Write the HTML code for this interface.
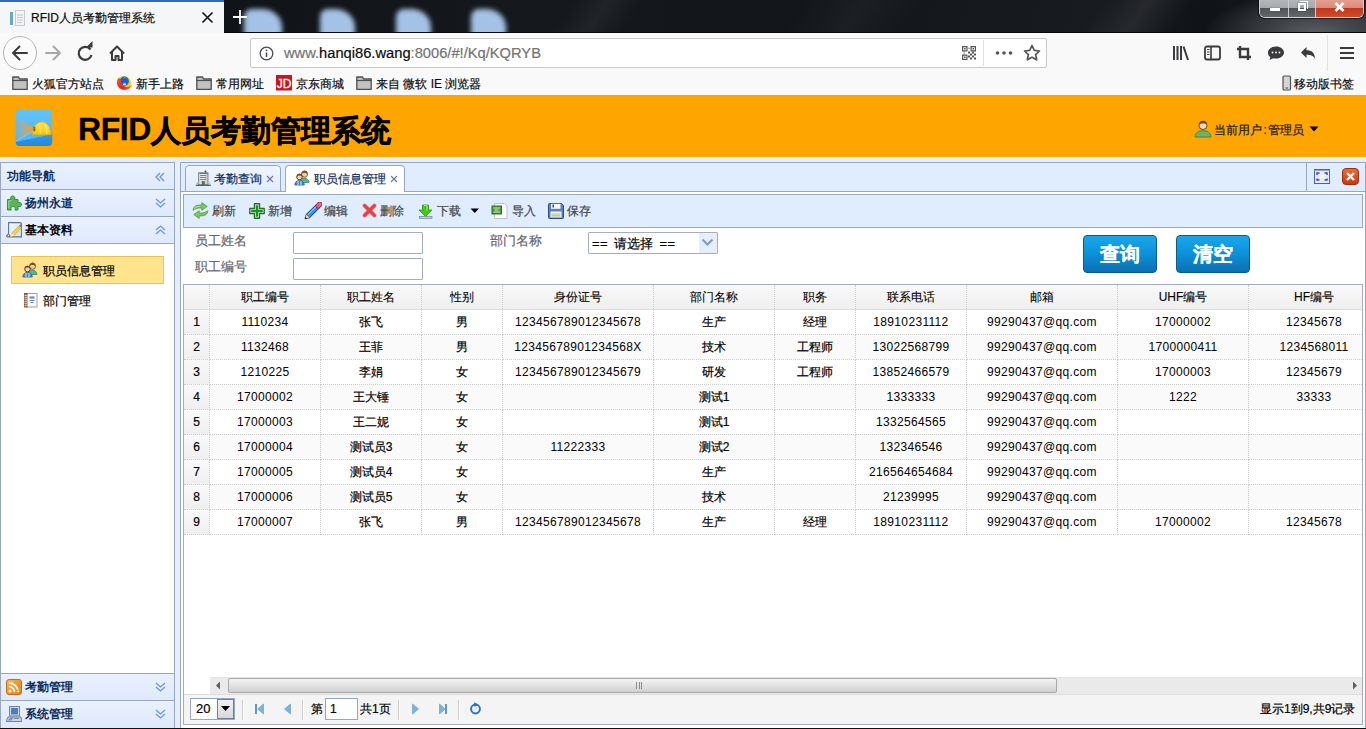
<!DOCTYPE html>
<html><head><meta charset="utf-8"><title>RFID</title>
<style>
*{box-sizing:border-box}
html,body{margin:0;padding:0;width:1366px;height:729px;overflow:hidden;background:#f9f9fa;font-family:"Liberation Sans",sans-serif;font-size:12px;color:#000}
body{-webkit-text-stroke-width:0.2px}
.a{position:absolute}
#tabbar{left:0;top:0;width:1366px;height:33px;background:radial-gradient(ellipse 110px 40px at 1315px 32px,rgba(110,113,118,.75),rgba(110,113,118,0)),linear-gradient(100deg,#0d1014 0%,#15191e 40%,#12161b 60%,#181c21 80%,#101317 88%,#1c1f23 100%);overflow:hidden}
.blob{position:absolute;top:9px;width:35px;height:30px;border-radius:8px 20px 0 0/8px 18px 0 0;background:#a4c2e6;filter:blur(2.8px)}
#acttab{left:0;top:0;width:224px;height:33px;background:#f5f6f7;border-top:2px solid #2f69c4}
#navbar{left:0;top:33px;width:1366px;height:62px;background:#f9f9fa}
#urlbox{left:250px;top:38px;width:797px;height:30px;border:1px solid #c9c9cb;border-radius:2px;background:#fff}
.bm{top:76px;height:17px;line-height:17px;font-size:12px;color:#0c0c0d;white-space:nowrap}
#hdr{left:0;top:95px;width:1366px;height:62px;background:#ffa500}
#ttl{left:78px;top:111px;font-size:30px;font-weight:bold;color:#000;line-height:36px;white-space:nowrap;-webkit-text-stroke:0.6px #000}
#main{left:0;top:157px;width:1366px;height:571px;background:#e6eef8}
#taskbar{left:0;top:728px;width:1366px;height:1px;background:#111;z-index:10}
.ph{position:absolute;left:0;width:173px;height:27px;background:linear-gradient(to bottom,#eaf1fd 0,#dee9fb 100%);border-bottom:1px solid #97a7c3}
.pt{position:absolute;top:6px;margin-left:1px;-webkit-text-stroke-width:0;font-weight:bold;color:#0e2d5f;font-size:12px;line-height:14px;white-space:nowrap}
.chev{position:absolute;left:155px;top:8px}
.ico{position:absolute}
.tb{position:absolute;top:203px;line-height:16px;color:#444;white-space:nowrap}
.lbl{position:absolute;color:#666670;font-size:13px;line-height:15px;white-space:nowrap}
.inp{position:absolute;border:1px solid #a6acc4;background:#fff;border-radius:1px}
.g{position:absolute;left:0;width:1179px;height:25px}
.c{position:absolute;top:0;height:25px;line-height:25px;text-align:center;white-space:nowrap;overflow:hidden;border-right:1px dotted #ccc;border-bottom:1px dotted #ccc}
.hd .c{border-bottom:none;color:#000;-webkit-text-stroke-width:0.1px}
.n{letter-spacing:0.33px;-webkit-text-stroke-width:0}
.sep{position:absolute;top:700px;width:2px;height:20px;border-left:1px solid #ccc;border-right:1px solid #fff}
</style></head><body>
<!-- TAB BAR -->
<div id="tabbar" class="a">
  <div class="a" style="left:560px;top:-10px;width:70px;height:60px;background:linear-gradient(90deg,transparent,rgba(255,255,255,.05),transparent);transform:skewX(-35deg)"></div>
  <div class="a" style="left:790px;top:-10px;width:120px;height:60px;background:linear-gradient(90deg,transparent,rgba(255,255,255,.04),transparent);transform:skewX(-35deg)"></div>
  <div class="a" style="left:1090px;top:-10px;width:90px;height:60px;background:linear-gradient(90deg,transparent,rgba(255,255,255,.07),transparent);transform:skewX(-35deg)"></div>
  <div class="blob" style="left:244px;width:38px"></div>
  <div class="blob" style="left:320px"></div>
  <div class="blob" style="left:396px"></div>
  <div class="blob" style="left:471px"></div>
  <div class="a" style="left:0;top:32px;width:1366px;height:1px;background:#050608"></div>
</div>
<div id="acttab" class="a"></div>
<svg class="a" style="left:9px;top:9px" width="18" height="18" viewBox="0 0 18 18">
  <rect x="1" y="3" width="3" height="13" fill="#6ea5cf"/>
  <rect x="6.5" y="1.5" width="9" height="15" fill="#f4f4f4" stroke="#c9c9c9"/>
  <path d="M8 6h6M8 8.5h6M8 11h6M8 13.5h5" stroke="#c7c7c7" stroke-width="1"/>
</svg>
<div class="a" style="left:31px;top:10px;font-size:12px;line-height:16px;color:#0c0c0d;white-space:nowrap">RFID人员考勤管理系统</div>
<svg class="a" style="left:200px;top:10px" width="16" height="16" viewBox="0 0 16 16"><path d="M2.5 2.5l10 10M12.5 2.5l-10 10" stroke="#111" stroke-width="1.6"/></svg>
<svg class="a" style="left:232px;top:9px" width="16" height="16" viewBox="0 0 16 16"><path d="M8 1v14M1 8h14" stroke="#fff" stroke-width="1.8"/></svg>
<!-- window controls -->
<div class="a" style="left:1259px;top:-3px;width:105px;height:21px;border:1px solid #cfd2d6;border-top:none;border-radius:0 0 6px 6px;overflow:hidden;box-shadow:0 0 0 1px rgba(0,0,0,.55)">
  <div class="a" style="left:0;top:0;width:29px;height:20px;background:linear-gradient(#b9bcc0 0,#a4a8ac 55%,#4e5358 56%,#62676c 100%);border-right:1px solid #c9ccd0"></div>
  <div class="a" style="left:29px;top:0;width:27px;height:20px;background:linear-gradient(#b9bcc0 0,#a4a8ac 55%,#4e5358 56%,#62676c 100%);border-right:1px solid #c9ccd0"></div>
  <div class="a" style="left:56px;top:0;width:49px;height:20px;background:linear-gradient(#e8a597 0,#dc8a78 55%,#c3381c 56%,#cf4a2a 100%)"></div>
  <div class="a" style="left:10px;top:11px;width:10px;height:3px;background:#fff;box-shadow:0 0 1px #222"></div>
  <div class="a" style="left:38px;top:6px;width:8px;height:8px;border:2px solid #fff;box-shadow:0 0 1px #222"></div>
  <div class="a" style="left:40px;top:4px;width:8px;height:8px;border-top:1.5px solid #fff;border-right:1.5px solid #fff"></div>
  <svg class="a" style="left:74px;top:5px" width="11" height="10" viewBox="0 0 11 10"><path d="M1.5 1l8 8M9.5 1l-8 8" stroke="#fff" stroke-width="2.6"/></svg>
</div>
<!-- NAV -->
<div id="navbar" class="a"></div>
<svg class="a" style="left:0;top:33px" width="240" height="40" viewBox="0 33 240 40">
  <circle cx="20" cy="53" r="16.5" fill="#fbfbfb" stroke="#b5b5b7" stroke-width="1"/>
  <path d="M27 53H13M19.5 46.5L13 53l6.5 6.5" fill="none" stroke="#3b3b3d" stroke-width="2" stroke-linecap="round" stroke-linejoin="round"/>
  <path d="M60 53H46M53.5 46.5L60 53l-6.5 6.5" fill="none" stroke="#a8a8aa" stroke-width="2" stroke-linecap="round" stroke-linejoin="round"/>
  <path d="M90.5 49.5A6.5 6.5 0 1 0 91.5 55" fill="none" stroke="#3b3b3d" stroke-width="2.2"/>
  <path d="M86 47.5h6.5V41z" fill="#3b3b3d"/>
  <path d="M110 53.5L117 46.5l7 7M112 52v8h3.5v-4h3v4h3.5v-8" fill="none" stroke="#3b3b3d" stroke-width="2" stroke-linejoin="round"/>
</svg>
<div id="urlbox" class="a"></div>
<svg class="a" style="left:259px;top:46px" width="15" height="15" viewBox="0 0 15 15"><circle cx="7.5" cy="7.5" r="6.3" fill="none" stroke="#4a4a4f" stroke-width="1.3"/><path d="M7.5 6.5v4.5" stroke="#4a4a4f" stroke-width="1.5"/><circle cx="7.5" cy="4.3" r="0.9" fill="#4a4a4f"/></svg>
<div class="a" style="left:284px;top:44px;font-size:14.7px;line-height:18px;color:#737373;white-space:nowrap">www.<span style="color:#0c0c0d">hanqi86.wang</span>:8006/#!/Kq/KQRYB</div>
<svg class="a" style="left:962px;top:46px" width="14" height="14" viewBox="0 0 14 14">
  <path d="M.6 .6h4.3v4.3H.6zM9.1 .6h4.3v4.3H9.1zM.6 9.1h4.3v4.3H.6z" fill="none" stroke="#555" stroke-width="1.2"/>
  <path d="M2 2h1.5v1.5H2zM10.5 2H12v1.5h-1.5zM2 10.5h1.5V12H2z" fill="#555"/>
  <path d="M5 2.2h4M2.2 5v4" stroke="#888" stroke-width=".9"/>
  <path d="M6 5.5h2v2H6zM10 5.5h2v2h-2zM8 7.5h2v2H8zM12 7.5h2v2h-2zM6 9.5h2v2H6zM10 9.5h2v2h-2zM8 11.5h2v2H8zM12 11.5h2v2h-2z" fill="#555"/>
</svg>
<div class="a" style="left:983px;top:40px;width:1px;height:26px;background:#e0e0e1"></div>
<svg class="a" style="left:995px;top:49px" width="18" height="8" viewBox="0 0 18 8"><circle cx="2.5" cy="4" r="1.8" fill="#555"/><circle cx="9" cy="4" r="1.8" fill="#555"/><circle cx="15.5" cy="4" r="1.8" fill="#555"/></svg>
<svg class="a" style="left:1023px;top:44px" width="18" height="18" viewBox="0 0 18 18"><path d="M9 1.5l2.3 4.9 5.2.6-3.9 3.6 1.1 5.2L9 13.2l-4.7 2.6 1.1-5.2L1.5 7l5.2-.6z" fill="none" stroke="#555" stroke-width="1.7" stroke-linejoin="round"/></svg>
<svg class="a" style="left:1170px;top:44px" width="190" height="18" viewBox="0 0 190 18">
  <path d="M4 2v14M7.5 2v14M11 2v14M13.5 2.5l4.5 13.5" stroke="#3b3b3d" stroke-width="2"/>
  <rect x="35" y="2.5" width="15" height="13" rx="2" fill="none" stroke="#3b3b3d" stroke-width="1.8"/><path d="M41 2.5v13" stroke="#3b3b3d" stroke-width="1.6"/><path d="M37 5.5h2.5M37 8h2.5M37 10.5h2.5" stroke="#3b3b3d" stroke-width="1.2"/>
  <path d="M70 2v11h11M67 5h11v11" fill="none" stroke="#3b3b3d" stroke-width="2.4"/>
  <path d="M106 2.5c4.5 0 8 2.7 8 6s-3.5 6-8 6c-.9 0-1.8-.1-2.6-.3L99.5 16l.9-2.9c-1.7-1.1-2.4-2.6-2.4-4.6 0-3.3 3.5-6 8-6z" fill="#3b3b3d"/><circle cx="102.5" cy="8.5" r=".9" fill="#f9f9fa"/><circle cx="106" cy="8.5" r=".9" fill="#f9f9fa"/><circle cx="109.5" cy="8.5" r=".9" fill="#f9f9fa"/>
  <path d="M131 8.5l5.5-5.5v3.2c5 0 8.5 2.5 8.5 8.5-1.5-3-4-4-8.5-4v3.3z" fill="#3b3b3d"/>
  <path d="M170 4h14M170 9h14M170 14h14" stroke="#3b3b3d" stroke-width="2"/>
</svg>
<div class="a" style="left:1327px;top:35px;width:1px;height:36px;background:#e2e2e3"></div>
<!-- bookmarks -->
<svg class="a" style="left:0;top:74px" width="380" height="18" viewBox="0 74 380 18">
  <g id="fold"><path d="M12.8 77h5.5l1.6 2h7.3v10.3H12.8z" fill="#c2c2c2" stroke="#4f4f51" stroke-width="1.3" stroke-linejoin="round"/><path d="M12.8 80.5h14.4" stroke="#4f4f51" stroke-width="1.2"/></g>
  <use href="#fold" x="184"/>
  <use href="#fold" x="344"/>
  <defs><linearGradient id="ffx" x1="0" y1="0" x2="1" y2="1"><stop offset="0" stop-color="#ff5a1a"/><stop offset=".6" stop-color="#e8202e"/><stop offset="1" stop-color="#ff7a10"/></linearGradient></defs>
  <circle cx="124" cy="83" r="7" fill="#ffcc10"/>
  <circle cx="124.3" cy="81.2" r="4.6" fill="#1f5fd0"/>
  <path d="M124.3 76.6a4.6 4.6 0 0 1 2.5 .8c-1 .5-2.6.6-3.5 1.5z" fill="#30a8e0"/>
  <path d="M119.2 77.2c-2.8 2.6-2.9 7.6-.2 10.4 2.8 2.9 7.8 3.1 10.8.3 1-.9 1.6-1.8 2-2.9-1.6 1.8-4.8 2.4-7.2 1.6-2.6-.9-4.1-3.5-3.6-6.2-.9-.8-1.6-1.9-1.8-3.2z" fill="url(#ffx)"/>
  <ellipse cx="124.6" cy="84.2" rx="1.6" ry=".9" fill="#eaf0ff"/>
  <rect x="276" y="75" width="16" height="15.5" fill="#c8161e"/>
  <text x="284" y="87.5" font-family="Liberation Sans" font-size="12" fill="#fff" text-anchor="middle" stroke="#fff" stroke-width=".3">JD</text>
</svg>
<div class="bm a" style="left:32px">火狐官方站点</div>
<div class="bm a" style="left:136px">新手上路</div>
<div class="bm a" style="left:216px">常用网址</div>
<div class="bm a" style="left:296px">京东商城</div>
<div class="bm a" style="left:376px">来自 微软 IE 浏览器</div>
<svg class="a" style="left:1281px;top:75px" width="11" height="16" viewBox="0 0 11 16"><rect x="2" y="1" width="7.5" height="14" rx="1.3" fill="#d5d5d5" stroke="#4f4f51" stroke-width="1.2"/><path d="M4.5 13h2.5" stroke="#4f4f51"/></svg>
<div class="bm a" style="left:1294px">移动版书签</div>


<div id="hdr" class="a"></div>
<div id="ttl" class="a"><span style="font-size:32px;letter-spacing:-0.4px;-webkit-text-stroke-width:0.3px;vertical-align:1px">RFID</span>人员考勤管理系统</div>
<div class="a" style="left:1214px;top:123px;line-height:14px;color:#1a1a1a;white-space:nowrap">当前用户<span style="margin:0 1px 0 1.5px">:</span>管理员</div>
<div id="main" class="a"></div><div id="taskbar" class="a"></div>
<div class="a" style="left:0;top:157px;width:1366px;height:1px;background:#fdf6e3"></div>
<div class="a" style="left:0;top:162px;width:175px;height:566px;border:1px solid #97a7c3;border-bottom:none;background:#fff">
<div class="ph" style="top:0"><div class="pt" style="left:5px">功能导航</div></div>
<div class="ph" style="top:27px"><div class="pt" style="left:23px">扬州永道</div></div>
<div class="ph" style="top:54px"><div class="pt" style="left:23px;color:#000">基本资料</div></div>
<div class="ph" style="top:510px;border-top:1px solid #97a7c3;height:28px"><div class="pt" style="left:23px">考勤管理</div></div>
<div class="ph" style="top:538px;border-bottom:none;height:27px"><div class="pt" style="left:23px">系统管理</div></div>
<div class="a" style="left:10px;top:93px;width:153px;height:28px;background:#ffe48d;border:1px solid #f0c050"></div>
<div class="a" style="left:42px;top:101px;line-height:14px">职员信息管理</div>
<div class="a" style="left:42px;top:131px;line-height:14px">部门管理</div>
</div>
<div class="a" style="left:180px;top:162px;width:1186px;height:566px;border:1px solid #97a7c3;border-bottom:none;background:#fff"></div>
<div class="a" style="left:181px;top:163px;width:1184px;height:29px;background:#e0ecff;border-bottom:1px solid #97a7c3"></div>
<div class="a" style="left:1306px;top:163px;width:1px;height:29px;background:#97a7c3"></div>
<div class="a" style="left:185px;top:165px;width:96px;height:27px;border:1px solid #97a7c3;border-radius:4px 4px 0 0;background:linear-gradient(to bottom,#eff5ff 0,#e0ecff 100%)"></div>
<div class="a" style="left:285px;top:165px;width:120px;height:27px;border:1px solid #97a7c3;border-bottom:none;border-radius:4px 4px 0 0;background:#fff"></div>
<div class="a" style="left:214px;top:172px;line-height:14px;color:#0e2d5f;white-space:nowrap">考勤查询</div>
<div class="a" style="left:314px;top:172px;line-height:14px;color:#0e2d5f;white-space:nowrap">职员信息管理</div>
<div class="a" style="left:183px;top:194px;width:1180px;height:34px;border:1px solid #97a7c3;background:#e0ecff"></div>
<div class="tb" style="left:212px">刷新</div>
<div class="tb" style="left:268px">新增</div>
<div class="tb" style="left:324px">编辑</div>
<div class="tb" style="left:380px">删除</div>
<div class="tb" style="left:437px">下载</div>
<div class="tb" style="left:512px">导入</div>
<div class="tb" style="left:567px">保存</div>
<div class="lbl" style="left:195px;top:233px">员工姓名</div>
<div class="lbl" style="left:195px;top:259px">职工编号</div>
<div class="lbl" style="left:490px;top:233px">部门名称</div>
<div class="inp" style="left:293px;top:232px;width:130px;height:22px"></div>
<div class="inp" style="left:293px;top:258px;width:130px;height:22px"></div>
<div class="inp" style="left:588px;top:232px;width:130px;height:22px"></div>
<div class="a" style="left:592px;top:236px;font-size:13px;line-height:15px;white-space:nowrap;word-spacing:2px;letter-spacing:0.3px">== 请选择 ==</div>
<div class="a" style="left:1083px;top:235px;width:74px;height:38px;border:1px solid #0a5c8c;border-radius:4px;background:linear-gradient(to bottom,#1aa8ea 0,#0c90d8 50%,#0a70b0 100%);color:#fff;font-weight:bold;font-size:20px;line-height:36px;text-align:center">查询</div>
<div class="a" style="left:1176px;top:235px;width:74px;height:38px;border:1px solid #0a5c8c;border-radius:4px;background:linear-gradient(to bottom,#1aa8ea 0,#0c90d8 50%,#0a70b0 100%);color:#fff;font-weight:bold;font-size:20px;line-height:36px;text-align:center">清空</div>
<div class="a" style="left:183px;top:284px;width:1180px;height:441px;border:1px solid #a3acbc;background:#fff;overflow:hidden">
<div class="a hd" style="left:0;top:0;width:1178px;height:25px;background:linear-gradient(to bottom,#f9f9f9 0,#efefef 100%);border-bottom:1px solid #ddd">
<div class="c" style="left:0;width:26px;height:24px"></div>
<div class="c" style="left:26px;width:111px;height:24px;line-height:24px">职工编号</div>
<div class="c" style="left:137px;width:101px;height:24px;line-height:24px">职工姓名</div>
<div class="c" style="left:238px;width:81px;height:24px;line-height:24px">性别</div>
<div class="c" style="left:319px;width:151px;height:24px;line-height:24px">身份证号</div>
<div class="c" style="left:470px;width:121px;height:24px;line-height:24px">部门名称</div>
<div class="c" style="left:591px;width:81px;height:24px;line-height:24px">职务</div>
<div class="c" style="left:672px;width:111px;height:24px;line-height:24px">联系电话</div>
<div class="c" style="left:783px;width:151px;height:24px;line-height:24px">邮箱</div>
<div class="c" style="left:934px;width:131px;height:24px;line-height:24px">UHF编号</div>
<div class="c" style="left:1065px;width:131px;height:24px;line-height:24px">HF编号</div>
</div>
<div class="g" style="top:25px;background:#fff">
<div class="c" style="left:0;width:26px;background:linear-gradient(to bottom,#f9f9f9 0,#efefef 100%)">1</div>
<div class="c n" style="left:26px;width:111px">1110234</div>
<div class="c" style="left:137px;width:101px">张飞</div>
<div class="c" style="left:238px;width:81px">男</div>
<div class="c n" style="left:319px;width:151px">123456789012345678</div>
<div class="c" style="left:470px;width:121px">生产</div>
<div class="c" style="left:591px;width:81px">经理</div>
<div class="c n" style="left:672px;width:111px">18910231112</div>
<div class="c n" style="left:783px;width:151px">99290437@qq.com</div>
<div class="c n" style="left:934px;width:131px">17000002</div>
<div class="c n" style="left:1065px;width:131px">12345678</div>
</div>
<div class="g" style="top:50px;background:#fafafa">
<div class="c" style="left:0;width:26px;background:linear-gradient(to bottom,#f9f9f9 0,#efefef 100%)">2</div>
<div class="c n" style="left:26px;width:111px">1132468</div>
<div class="c" style="left:137px;width:101px">王菲</div>
<div class="c" style="left:238px;width:81px">男</div>
<div class="c n" style="left:319px;width:151px">12345678901234568X</div>
<div class="c" style="left:470px;width:121px">技术</div>
<div class="c" style="left:591px;width:81px">工程师</div>
<div class="c n" style="left:672px;width:111px">13022568799</div>
<div class="c n" style="left:783px;width:151px">99290437@qq.com</div>
<div class="c n" style="left:934px;width:131px">1700000411</div>
<div class="c n" style="left:1065px;width:131px">1234568011</div>
</div>
<div class="g" style="top:75px;background:#fff">
<div class="c" style="left:0;width:26px;background:linear-gradient(to bottom,#f9f9f9 0,#efefef 100%)">3</div>
<div class="c n" style="left:26px;width:111px">1210225</div>
<div class="c" style="left:137px;width:101px">李娟</div>
<div class="c" style="left:238px;width:81px">女</div>
<div class="c n" style="left:319px;width:151px">123456789012345679</div>
<div class="c" style="left:470px;width:121px">研发</div>
<div class="c" style="left:591px;width:81px">工程师</div>
<div class="c n" style="left:672px;width:111px">13852466579</div>
<div class="c n" style="left:783px;width:151px">99290437@qq.com</div>
<div class="c n" style="left:934px;width:131px">17000003</div>
<div class="c n" style="left:1065px;width:131px">12345679</div>
</div>
<div class="g" style="top:100px;background:#fafafa">
<div class="c" style="left:0;width:26px;background:linear-gradient(to bottom,#f9f9f9 0,#efefef 100%)">4</div>
<div class="c n" style="left:26px;width:111px">17000002</div>
<div class="c" style="left:137px;width:101px">王大锤</div>
<div class="c" style="left:238px;width:81px">女</div>
<div class="c" style="left:319px;width:151px"></div>
<div class="c" style="left:470px;width:121px">测试1</div>
<div class="c" style="left:591px;width:81px"></div>
<div class="c n" style="left:672px;width:111px">1333333</div>
<div class="c n" style="left:783px;width:151px">99290437@qq.com</div>
<div class="c n" style="left:934px;width:131px">1222</div>
<div class="c n" style="left:1065px;width:131px">33333</div>
</div>
<div class="g" style="top:125px;background:#fff">
<div class="c" style="left:0;width:26px;background:linear-gradient(to bottom,#f9f9f9 0,#efefef 100%)">5</div>
<div class="c n" style="left:26px;width:111px">17000003</div>
<div class="c" style="left:137px;width:101px">王二妮</div>
<div class="c" style="left:238px;width:81px">女</div>
<div class="c" style="left:319px;width:151px"></div>
<div class="c" style="left:470px;width:121px">测试1</div>
<div class="c" style="left:591px;width:81px"></div>
<div class="c n" style="left:672px;width:111px">1332564565</div>
<div class="c n" style="left:783px;width:151px">99290437@qq.com</div>
<div class="c" style="left:934px;width:131px"></div>
<div class="c" style="left:1065px;width:131px"></div>
</div>
<div class="g" style="top:150px;background:#fafafa">
<div class="c" style="left:0;width:26px;background:linear-gradient(to bottom,#f9f9f9 0,#efefef 100%)">6</div>
<div class="c n" style="left:26px;width:111px">17000004</div>
<div class="c" style="left:137px;width:101px">测试员3</div>
<div class="c" style="left:238px;width:81px">女</div>
<div class="c n" style="left:319px;width:151px">11222333</div>
<div class="c" style="left:470px;width:121px">测试2</div>
<div class="c" style="left:591px;width:81px"></div>
<div class="c n" style="left:672px;width:111px">132346546</div>
<div class="c n" style="left:783px;width:151px">99290437@qq.com</div>
<div class="c" style="left:934px;width:131px"></div>
<div class="c" style="left:1065px;width:131px"></div>
</div>
<div class="g" style="top:175px;background:#fff">
<div class="c" style="left:0;width:26px;background:linear-gradient(to bottom,#f9f9f9 0,#efefef 100%)">7</div>
<div class="c n" style="left:26px;width:111px">17000005</div>
<div class="c" style="left:137px;width:101px">测试员4</div>
<div class="c" style="left:238px;width:81px">女</div>
<div class="c" style="left:319px;width:151px"></div>
<div class="c" style="left:470px;width:121px">生产</div>
<div class="c" style="left:591px;width:81px"></div>
<div class="c n" style="left:672px;width:111px">216564654684</div>
<div class="c n" style="left:783px;width:151px">99290437@qq.com</div>
<div class="c" style="left:934px;width:131px"></div>
<div class="c" style="left:1065px;width:131px"></div>
</div>
<div class="g" style="top:200px;background:#fafafa">
<div class="c" style="left:0;width:26px;background:linear-gradient(to bottom,#f9f9f9 0,#efefef 100%)">8</div>
<div class="c n" style="left:26px;width:111px">17000006</div>
<div class="c" style="left:137px;width:101px">测试员5</div>
<div class="c" style="left:238px;width:81px">女</div>
<div class="c" style="left:319px;width:151px"></div>
<div class="c" style="left:470px;width:121px">技术</div>
<div class="c" style="left:591px;width:81px"></div>
<div class="c n" style="left:672px;width:111px">21239995</div>
<div class="c n" style="left:783px;width:151px">99290437@qq.com</div>
<div class="c" style="left:934px;width:131px"></div>
<div class="c" style="left:1065px;width:131px"></div>
</div>
<div class="g" style="top:225px;background:#fff">
<div class="c" style="left:0;width:26px;background:linear-gradient(to bottom,#f9f9f9 0,#efefef 100%)">9</div>
<div class="c n" style="left:26px;width:111px">17000007</div>
<div class="c" style="left:137px;width:101px">张飞</div>
<div class="c" style="left:238px;width:81px">男</div>
<div class="c n" style="left:319px;width:151px">123456789012345678</div>
<div class="c" style="left:470px;width:121px">生产</div>
<div class="c" style="left:591px;width:81px">经理</div>
<div class="c n" style="left:672px;width:111px">18910231112</div>
<div class="c n" style="left:783px;width:151px">99290437@qq.com</div>
<div class="c n" style="left:934px;width:131px">17000002</div>
<div class="c n" style="left:1065px;width:131px">12345678</div>
</div>
<div class="a" style="left:26px;top:392px;width:1153px;height:17px;background:#eaeaea;border-top:1px solid #e4e4e4"></div>
<svg class="a" style="left:26px;top:392px" width="18" height="17"><path d="M6 8.5L10 4.5v8z" fill="#606060"/></svg>
<div class="a" style="left:44px;top:393px;width:829px;height:15px;border:1px solid #a9a9a9;border-radius:2px;background:linear-gradient(to bottom,#f3f3f3 0,#e2e2e2 50%,#d0d0d0 100%)"></div>
<div class="a" style="left:452px;top:397px;width:6px;height:7px;border-left:1px solid #8a8a8a;border-right:1px solid #8a8a8a"></div><div class="a" style="left:455px;top:397px;width:1px;height:7px;background:#8a8a8a"></div>
<svg class="a" style="left:1161px;top:392px" width="18" height="17"><path d="M8 4.5L12 8.5l-4 4z" fill="#606060"/></svg>
<div class="a" style="left:0;top:409px;width:1178px;height:30px;background:#f4f4f4;border-top:1px solid #ddd"></div>
</div>
<div class="sep" style="left:242px"></div><div class="sep" style="left:302px"></div><div class="sep" style="left:398px"></div><div class="sep" style="left:458px"></div>
<div class="a" style="left:190px;top:698px;width:45px;height:22px;border:1px solid #97a7c3;background:#fff"></div>
<div class="a" style="left:196px;top:702px;font-size:13px;line-height:14px">20</div>
<div class="a" style="left:311px;top:702px;line-height:14px">第</div>
<div class="a" style="left:325px;top:698px;width:33px;height:22px;border:1px solid #97a7c3;background:#fff"></div>
<div class="a" style="left:330px;top:702px;line-height:14px">1</div>
<div class="a" style="left:360px;top:702px;line-height:14px">共1页</div>
<div class="a" style="left:1260px;top:702px;line-height:14px;white-space:nowrap">显示1到9,共9记录</div>
<svg class="a" style="left:6px;top:195px" width="16" height="16" viewBox="0 0 16 16">
<path d="M1.5 4.5h3.5c-.3-.5-.5-1-.5-1.5 0-1.2 1-2 2.2-2s2.2.8 2.2 2c0 .5-.2 1-.5 1.5h3.6v3.3c.5-.3 1-.5 1.5-.5 1.2 0 2 1 2 2.2s-.8 2.2-2 2.2c-.5 0-1-.2-1.5-.5V15H8.8c.3-.5.5-1 .5-1.5 0-1.2-1-2.1-2.2-2.1s-2.2.9-2.2 2.1c0 .5.2 1 .5 1.5H1.5z" fill="#58b658" stroke="#3b8f3b" stroke-width="1"/>
<path d="M2.8 5.8h2.7M2.8 5.8v7.5" stroke="#9ad89a" stroke-width="1"/></svg>
<svg class="a" style="left:6px;top:222px" width="16" height="16" viewBox="0 0 16 16">
<defs><linearGradient id="ntg" x1="0" y1="0" x2="1" y2="1"><stop offset="0" stop-color="#f4fbff"/><stop offset="1" stop-color="#c9e2f5"/></linearGradient></defs>
<path d="M2.6 .6h11.3c.9 0 1.6.7 1.6 1.6v12.7H1.5c-.8 0-1.1-.9-.6-1.4l1.7-1.6z" fill="url(#ntg)" stroke="#5d708c" stroke-width="1.1"/>
<path d="M3.5 12.5v2.2" stroke="#5d708c" stroke-width="1"/>
<path d="M4.6 14.6l1.2-3.4 7.3-7.6 2.4 2.3-7.4 7.6z" fill="#f3cd55" stroke="#d2a530" stroke-width=".7"/>
<path d="M4.6 14.6l1.2-3.4 2.3 2.3z" fill="#fdf0c8"/>
<path d="M13.1 3.6l1.3-1.3 2.4 2.3-1.3 1.3z" fill="#6b7a8a"/></svg>
<svg class="a" style="left:22px;top:262px" width="16" height="16" viewBox="0 0 16 16">
<circle cx="10.5" cy="4.3" r="3" fill="#f2cfa8" stroke="#8a4e22" stroke-width="1"/>
<path d="M7.6 3.8c.2-2.4 1.6-3.3 3-3.3 1.8 0 3.2 1.2 3 4.2-.5-.9-1.3-1.6-3-1.6-1.5 0-2.6.2-3 .7z" fill="#8a4e22"/>
<path d="M6.5 12.5c0-2.6 1.8-4.5 4-4.5s4.5 1.9 4.5 4.5z" fill="#5bb58a" stroke="#3a8a68" stroke-width=".8"/>
<circle cx="5.5" cy="7" r="2.8" fill="#f5d6b3" stroke="#6b3e1e" stroke-width="1"/>
<path d="M2.7 6.8c0-2 1.2-3 2.8-3s2.9 1 2.8 3c-.6-.8-1.6-1.2-2.8-1.2s-2.2.4-2.8 1.2z" fill="#6b3e1e"/>
<path d="M.8 15c0-2.8 2-4.6 4.7-4.6s4.8 1.8 4.8 4.6z" fill="#4f86c0" stroke="#2f5f98" stroke-width=".8"/>
<path d="M4 11v4M7 11v4" stroke="#cfe3f7" stroke-width="1"/></svg>
<svg class="a" style="left:23px;top:292px" width="16" height="16" viewBox="0 0 16 16">
<rect x="3.5" y="1.5" width="10.5" height="13.5" fill="#fbfbfb" stroke="#a0a0a0" stroke-width="1"/>
<rect x="1.5" y="1.5" width="2.5" height="13.5" fill="#b07c5c" stroke="#6e4a34" stroke-width=".8"/>
<path d="M1.5 3.5h2.5M1.5 5.5h2.5M1.5 7.5h2.5M1.5 9.5h2.5M1.5 11.5h2.5M1.5 13.5h2.5" stroke="#ead7c7" stroke-width=".8"/>
<rect x="6.5" y="4.5" width="5" height="2" fill="#5f7fd0"/>
<path d="M6.5 8.5h5M7.5 10.5h3" stroke="#5f7fd0" stroke-width="1"/></svg>
<svg class="a" style="left:6px;top:679px" width="16" height="16" viewBox="0 0 16 16">
<defs><linearGradient id="rssg" x1="0" y1="0" x2="1" y2="1"><stop offset="0" stop-color="#f7b850"/><stop offset="1" stop-color="#e9781c"/></linearGradient></defs>
<rect x=".5" y=".5" width="15" height="15" rx="2.5" fill="url(#rssg)" stroke="#d06a10" stroke-width="1"/>
<circle cx="4" cy="12" r="1.5" fill="#fff"/>
<path d="M2.8 7.5a5.7 5.7 0 0 1 5.7 5.7M2.8 3.8a9.4 9.4 0 0 1 9.4 9.4" fill="none" stroke="#fff" stroke-width="1.7"/>
<path d="M9 13l4.5-4.5 1.5 3z" fill="#9ccc40" opacity=".85"/></svg>
<svg class="a" style="left:6px;top:706px" width="16" height="16" viewBox="0 0 16 16">
<rect x="3.5" y=".5" width="10" height="9.5" fill="#d6dbe3" stroke="#7a8496" stroke-width="1"/>
<rect x="5" y="2" width="7" height="6.5" fill="#4b7fc2"/>
<path d="M2 11h13l1 4.5H0z" fill="#c9d2de" stroke="#6d7889" stroke-width=".9"/>
<path d="M1.5 14.5l3-3h3l-2 3z" fill="#6a9ad8"/>
<path d="M8 12.5h5" stroke="#8a94a5" stroke-width="1"/></svg>
<svg class="a" style="left:155px;top:172px" width="11" height="10" viewBox="0 0 11 10"><path d="M5 1L1 5l4 4M9 1L5 5l4 4" fill="none" stroke="#6a98d4" stroke-width="1.3"/></svg>
<svg class="a" style="left:155px;top:198px" width="11" height="10" viewBox="0 0 11 10"><path d="M1 1l4.5 4 4.5-4M1 5l4.5 4 4.5-4" fill="none" stroke="#6a98d4" stroke-width="1.3"/></svg>
<svg class="a" style="left:155px;top:225px" width="11" height="10" viewBox="0 0 11 10"><path d="M1 5l4.5-4 4.5 4M1 9l4.5-4 4.5 4" fill="none" stroke="#6a98d4" stroke-width="1.3"/></svg>
<svg class="a" style="left:155px;top:682px" width="11" height="10" viewBox="0 0 11 10"><path d="M1 1l4.5 4 4.5-4M1 5l4.5 4 4.5-4" fill="none" stroke="#6a98d4" stroke-width="1.3"/></svg>
<svg class="a" style="left:155px;top:709px" width="11" height="10" viewBox="0 0 11 10"><path d="M1 1l4.5 4 4.5-4M1 5l4.5 4 4.5-4" fill="none" stroke="#6a98d4" stroke-width="1.3"/></svg>
<svg class="a" style="left:195px;top:170px" width="16" height="16" viewBox="0 0 16 16">
<defs><linearGradient id="bldg" x1="0" y1="0" x2="1" y2="0"><stop offset="0" stop-color="#c9cdd2"/><stop offset=".5" stop-color="#f4f5f6"/><stop offset="1" stop-color="#b9bec4"/></linearGradient></defs>
<path d="M10.5 .5v2.5" stroke="#4a4f55" stroke-width="1.6"/>
<rect x="3.5" y="2.8" width="9.5" height="12" fill="url(#bldg)" stroke="#80868e" stroke-width=".9"/>
<path d="M4.5 3.3h8" stroke="#5a6068" stroke-width="1"/>
<path d="M5.2 5.5h6M5.2 7.5h6M5.2 9.5h6" stroke="#7a8088" stroke-width="1"/>
<rect x="6.8" y="11" width="3" height="3.8" fill="#5b6a5e"/>
<path d="M.8 15.3h15" stroke="#50664a" stroke-width="1.4"/>
<path d="M1.5 14.6c.8-1.3 1.4-2 2-2.2M15 14.6c-.8-1.3-1.4-2-2-2.2" stroke="#a8cc98" stroke-width="1.4" fill="none"/></svg>
<svg class="a" style="left:294px;top:170px" width="16" height="16" viewBox="0 0 16 16">
<circle cx="10.5" cy="4.3" r="3" fill="#f2cfa8" stroke="#8a4e22" stroke-width="1"/>
<path d="M7.6 3.8c.2-2.4 1.6-3.3 3-3.3 1.8 0 3.2 1.2 3 4.2-.5-.9-1.3-1.6-3-1.6-1.5 0-2.6.2-3 .7z" fill="#8a4e22"/>
<path d="M6.5 12.5c0-2.6 1.8-4.5 4-4.5s4.5 1.9 4.5 4.5z" fill="#5bb58a" stroke="#3a8a68" stroke-width=".8"/>
<circle cx="5.5" cy="7" r="2.8" fill="#f5d6b3" stroke="#6b3e1e" stroke-width="1"/>
<path d="M2.7 6.8c0-2 1.2-3 2.8-3s2.9 1 2.8 3c-.6-.8-1.6-1.2-2.8-1.2s-2.2.4-2.8 1.2z" fill="#6b3e1e"/>
<path d="M.8 15c0-2.8 2-4.6 4.7-4.6s4.8 1.8 4.8 4.6z" fill="#4f86c0" stroke="#2f5f98" stroke-width=".8"/>
<path d="M4 11v4M7 11v4" stroke="#cfe3f7" stroke-width="1"/></svg>
<svg class="a" style="left:266px;top:175px" width="8" height="8" viewBox="0 0 8 8"><path d="M1 1l6 6M7 1L1 7" stroke="#6b7b9b" stroke-width="1.2"/></svg>
<svg class="a" style="left:390px;top:175px" width="8" height="8" viewBox="0 0 8 8"><path d="M1 1l6 6M7 1L1 7" stroke="#6b7b9b" stroke-width="1.2"/></svg>
<svg class="a" style="left:1314px;top:169px" width="16" height="15" viewBox="0 0 16 15">
<rect x=".5" y=".5" width="15" height="14" fill="#e6ecf6" stroke="#4a5fb0" stroke-width="1"/>
<path d="M.5 1.5h15" stroke="#a0a8c8" stroke-width="1"/>
<path d="M3 6V4h2.5M10.5 4H13v2M13 9.5V11h-2.5M5.5 11H3V9.5" fill="none" stroke="#3a4fa8" stroke-width="1.5"/>
<circle cx="8" cy="7.5" r="2.5" fill="#f2f2f2"/></svg>
<svg class="a" style="left:1342px;top:168px" width="17" height="17" viewBox="0 0 17 17">
<defs><linearGradient id="clg" x1="0" y1="0" x2="0" y2="1"><stop offset="0" stop-color="#f06a3a"/><stop offset="1" stop-color="#c33a12"/></linearGradient></defs>
<rect x=".5" y=".5" width="16" height="16" rx="3.5" fill="url(#clg)" stroke="#9a3010" stroke-width="1"/>
<path d="M5 5l7 7M12 5l-7 7" stroke="#fff" stroke-width="2.4"/></svg>
<svg class="a" style="left:192px;top:202px" width="17" height="17" viewBox="0 0 17 17">
<path d="M1 8.3C1.3 4.8 4.2 2.9 7.8 3.1h2V.6l5.4 3.9-5.4 3.8V6h-2C5.4 6 3.4 6.8 1 8.3z" fill="#7dc766" stroke="#4f9a3c" stroke-width=".8" stroke-linejoin="round"/>
<path d="M16 8.7c-.3 3.5-3.2 5.4-6.8 5.2h-2v2.5L1.8 12.5 7.2 8.7V11h2c2.4 0 4.4-.8 6.8-2.3z" fill="#7dc766" stroke="#4f9a3c" stroke-width=".8" stroke-linejoin="round"/>
<path d="M2.5 6.5c1.2-1.6 3-2.3 5.3-2.3" stroke="#b8e6a8" stroke-width=".9" fill="none"/></svg>
<svg class="a" style="left:249px;top:203px" width="16" height="16" viewBox="0 0 16 16">
<path d="M5.5 .8h5v4.7h4.7v5h-4.7v4.7h-5v-4.7H.8v-5h4.7z" fill="#fff" stroke="#2a6a2a" stroke-width="1.4" stroke-linejoin="round"/>
<path d="M6.8 2.2h2.4v4.6h4.6v2.4H9.2v4.6H6.8V9.2H2.2V6.8h4.6z" fill="#17941a"/></svg>
<svg class="a" style="left:304px;top:202px" width="18" height="18" viewBox="0 0 18 18">
<path d="M4 14L14.2 3.8" stroke="#1d4f96" stroke-width="5.4"/>
<path d="M4 14L14.2 3.8" stroke="#3b94ec" stroke-width="3.6"/>
<path d="M3.6 13L13.4 3.2" stroke="#a6dcff" stroke-width="1"/>
<path d="M14.2 3.8l1.6-1.6" stroke="#9e2a3a" stroke-width="5.4" stroke-linecap="round"/>
<path d="M14.2 3.8l1.6-1.6" stroke="#e06a7a" stroke-width="3.6" stroke-linecap="round"/>
<path d="M1 17l1.2-5 3.8 3.8z" fill="#f6ecd0" stroke="#3a3a3a" stroke-width=".7" stroke-linejoin="round"/>
<path d="M1 17l.5-2.2 1.7 1.7z" fill="#111"/>
</svg>
<svg class="a" style="left:362px;top:203px" width="15" height="15" viewBox="0 0 15 15">
<path d="M2.6 2.6l9.8 9.8M12.4 2.6L2.6 12.4" stroke="#f2a0a6" stroke-width="4.4" stroke-linecap="round"/>
<path d="M2.6 2.6l9.8 9.8M12.4 2.6L2.6 12.4" stroke="#e5404a" stroke-width="3.2" stroke-linecap="round"/></svg>
<svg class="a" style="left:418px;top:204px" width="15" height="15" viewBox="0 0 15 15">
<path d="M4.5 1h6v5h3.5L7.5 12.5 1 6h3.5z" fill="#3dcc10" stroke="#2a9a10" stroke-width=".8"/>
<path d="M6 1.5h3v5" stroke="#9af07a" stroke-width="1" fill="none"/>
<rect x="1.5" y="12.5" width="12.5" height="1.8" fill="#c8d0e0" stroke="#7080a0" stroke-width=".7"/></svg>
<svg class="a" style="left:470px;top:208px" width="10" height="6" viewBox="0 0 10 6"><path d="M.5.5h8.5L4.75 5z" fill="#000"/></svg>
<svg class="a" style="left:491px;top:203px" width="17" height="16" viewBox="0 0 17 16">
<path d="M3.5 .5h10l2.5 2.5v12.5H3.5z" fill="#fbfbfb" stroke="#c0c0c0" stroke-width="1"/>
<rect x="1" y="3" width="9.5" height="8" fill="#4c9a3c" stroke="#2e6a22" stroke-width="1"/>
<path d="M2.5 5h6.5M2.5 9h6.5" stroke="#cde6c0" stroke-width="1"/>
<path d="M3.5 6l4 2M7.5 6l-4 2" stroke="#a8d890" stroke-width=".8"/></svg>
<svg class="a" style="left:548px;top:203px" width="16" height="16" viewBox="0 0 16 16">
<path d="M.5 1.5c0-.6.4-1 1-1h12l2 2v12c0 .6-.4 1-1 1h-13c-.6 0-1-.4-1-1z" fill="#5a7fc4" stroke="#2d4d8f" stroke-width="1"/>
<rect x="3" y=".8" width="9.5" height="5" fill="#f6f8fc"/>
<rect x="4.5" y="1.5" width="1.5" height="3" fill="#2d4d8f"/>
<rect x="2.5" y="8.5" width="11" height="6" fill="#f6f8fc"/>
<path d="M3.5 11h9M3.5 12.8h9" stroke="#9ac870" stroke-width="1.2"/></svg>
<svg class="a" style="left:254px;top:703px" width="11" height="12" viewBox="0 0 11 12"><rect x="1" y="1" width="2" height="10" fill="#5d97c8"/><path d="M9.5 1L3.8 6l5.7 5z" fill="#7ab3e0" stroke="#5d97c8" stroke-width=".6"/></svg>
<svg class="a" style="left:283px;top:703px" width="9" height="12" viewBox="0 0 9 12"><path d="M7.5 1L1.5 6l6 5z" fill="#7ab3e0" stroke="#5d97c8" stroke-width=".6"/></svg>
<svg class="a" style="left:411px;top:703px" width="9" height="12" viewBox="0 0 9 12"><path d="M1.5 1l6 5-6 5z" fill="#7ab3e0" stroke="#5d97c8" stroke-width=".6"/></svg>
<svg class="a" style="left:438px;top:703px" width="11" height="12" viewBox="0 0 11 12"><rect x="7" y="1" width="2" height="10" fill="#5d97c8"/><path d="M1.5 1l5.7 5-5.7 5z" fill="#7ab3e0" stroke="#5d97c8" stroke-width=".6"/></svg>
<svg class="a" style="left:469px;top:701px" width="13" height="14" viewBox="0 0 13 14">
<circle cx="6.5" cy="8" r="4.4" fill="none" stroke="#2b75b8" stroke-width="2"/>
<path d="M5 1.2l4.5 2.3L5.5 6z" fill="#2b75b8"/>
<path d="M5 9.5l3-3" stroke="#9cc8ec" stroke-width=".8"/></svg>
<div class="a" style="left:217px;top:699px;width:17px;height:20px;border:1px solid #6f7f9a;background:linear-gradient(to bottom,#f0f0f0 0,#d8d8d8 100%)"></div>
<svg class="a" style="left:220px;top:705px" width="11" height="7" viewBox="0 0 11 7"><path d="M1 1h9L5.5 6z" fill="#000"/></svg>
<div class="a" style="left:699px;top:233px;width:18px;height:20px;background:#e6eefa"></div>
<svg class="a" style="left:701px;top:238px" width="13" height="9" viewBox="0 0 13 9"><path d="M1.5 1.5L6.5 6.5 11.5 1.5" fill="none" stroke="#7a9ad0" stroke-width="2"/></svg>
<svg class="a" style="left:15px;top:109px" width="38" height="38" viewBox="0 0 38 38">
<defs>
<linearGradient id="lgsky" x1="0" y1="0" x2="0" y2="1"><stop offset="0" stop-color="#62c3fa"/><stop offset="1" stop-color="#4fb2f2"/></linearGradient>
<linearGradient id="lgbeam" x1="1" y1="0" x2="0" y2="0"><stop offset="0" stop-color="#f59a20"/><stop offset=".55" stop-color="#f0a040" stop-opacity=".55"/><stop offset="1" stop-color="#f0a040" stop-opacity="0"/></linearGradient>
<linearGradient id="lgsea" x1="0" y1="0" x2="0" y2="1"><stop offset="0" stop-color="#2f9ae8"/><stop offset="1" stop-color="#2488da"/></linearGradient>
<linearGradient id="lghel" x1="0" y1="0" x2="0" y2="1"><stop offset="0" stop-color="#fde25a"/><stop offset="1" stop-color="#f8c800"/></linearGradient>
</defs>
<rect x=".6" y=".4" width="36.6" height="36.7" rx="4" fill="url(#lgsky)"/>
<path d="M.6 7.9L20 19.5L.6 32.6z" fill="url(#lgbeam)"/>
<path d="M.6 33L37.2 25.3V33c0 2.3-1.8 4.1-4.1 4.1H4.7C2.4 37.1.6 35.3.6 33z" fill="url(#lgsea)"/>
<path d="M.6 32.2L20 21" stroke="#a8dcfb" stroke-width="1" opacity=".5"/>
<path d="M17.5 25.4c0-7.2 4-12.4 9.2-12.4 5.2 0 9 5.2 9 12.4z" fill="url(#lghel)" stroke="#f2b400" stroke-width=".8"/>
<path d="M23 15c1.8 2 2.6 5.5 2.4 10M29.5 14.5c2 2.2 2.6 5.8 2.2 10.5" stroke="#fff39a" stroke-width="1" fill="none" opacity=".8"/>
<rect x="18.3" y="17.8" width="2" height="4.5" fill="#a05a20"/></svg>
<svg class="a" style="left:1194px;top:120px" width="18" height="18" viewBox="0 0 18 18">
<circle cx="9" cy="5.5" r="4" fill="#f7d8c0" stroke="#6a4a2a" stroke-width="1"/>
<path d="M5 5c0-3 1.8-4.3 4-4.3s4 1.3 4 4.3c-.8-1.2-2-1.6-4-1.6S5.8 3.8 5 5z" fill="#6a4a2a"/>
<path d="M1 17c0-3.8 3.5-6.3 8-6.3s8 2.5 8 6.3z" fill="#6db56a" stroke="#4a7f48" stroke-width="1"/></svg>
<svg class="a" style="left:1309px;top:126px" width="10" height="6" viewBox="0 0 10 6"><path d="M.5.5h9L5 5.5z" fill="#000"/></svg>
</body></html>
